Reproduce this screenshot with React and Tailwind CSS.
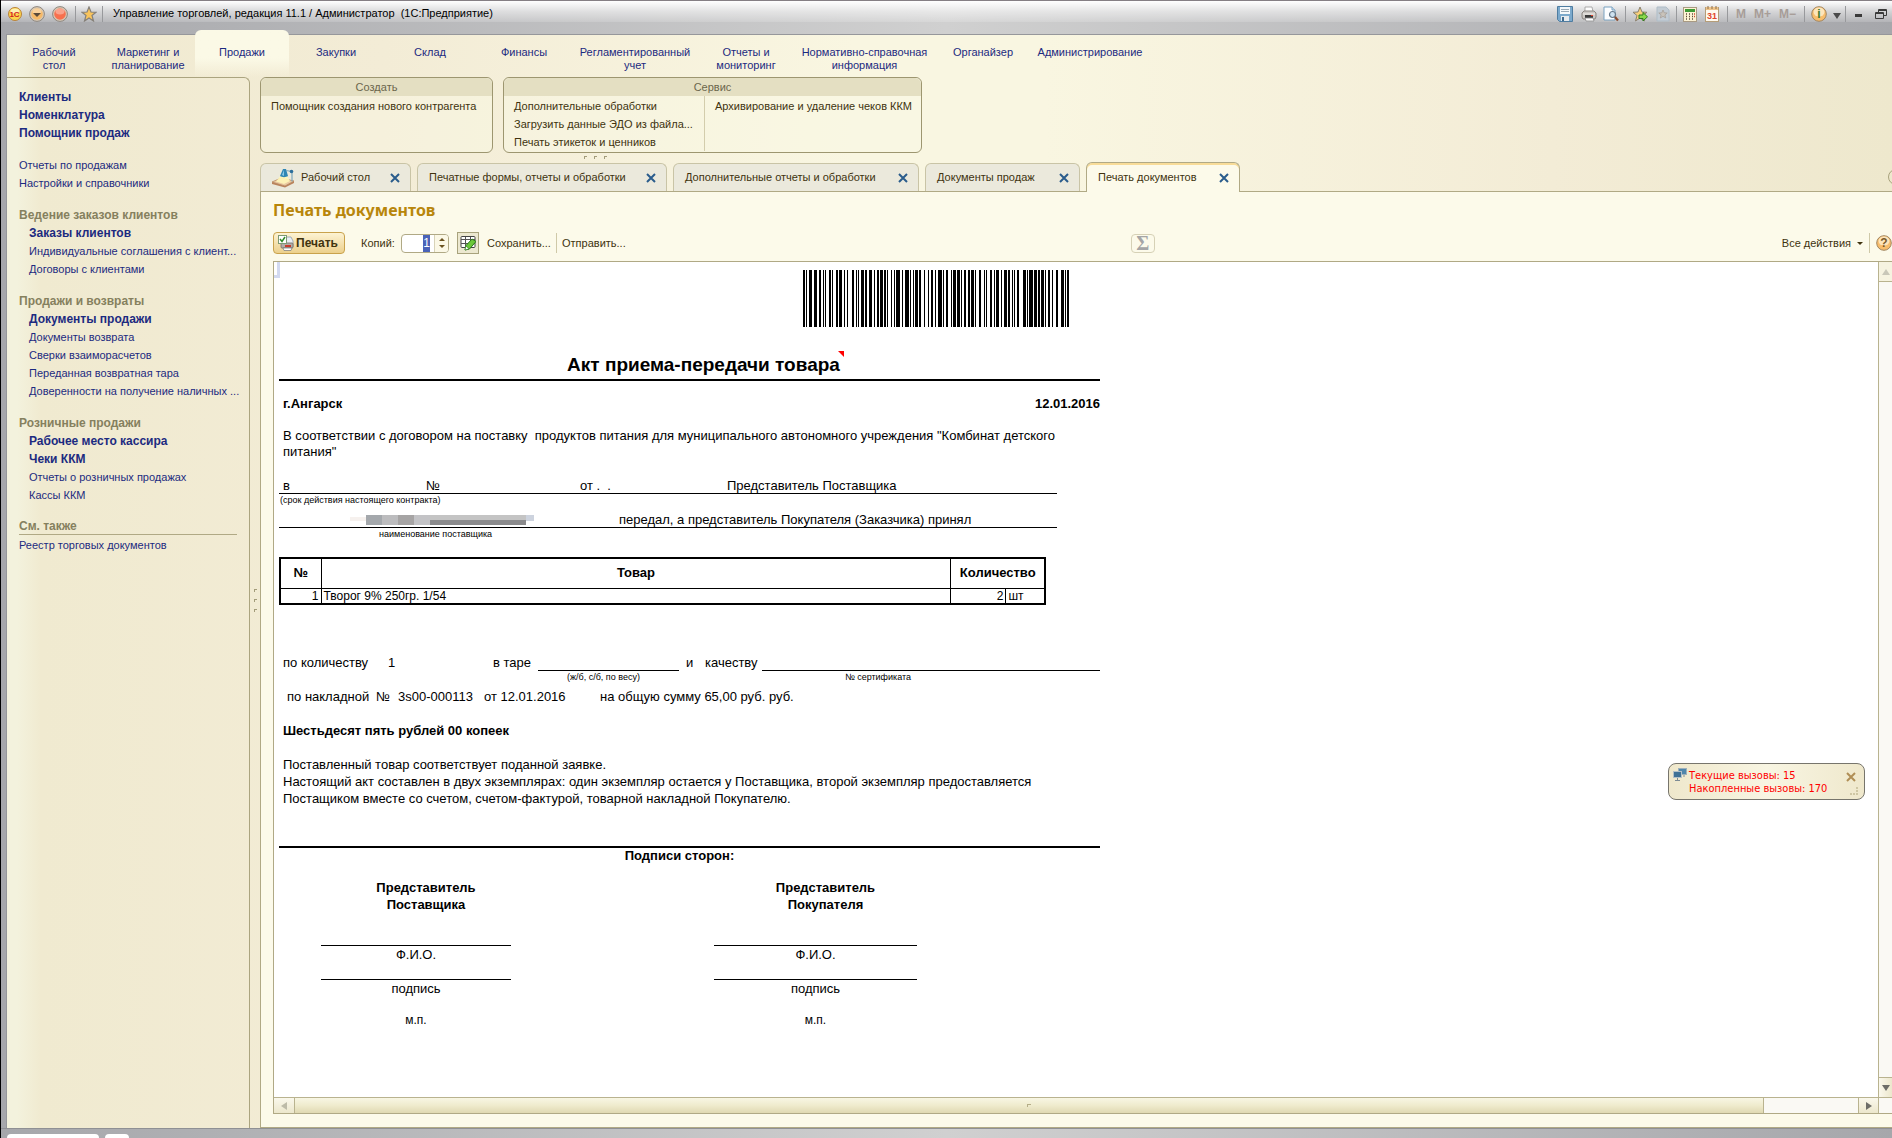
import { useEffect, useRef } from 'react'

const SECTIONS = [
  { label: 'Рабочий\nстол', width: 'w-[94px]' },
  { label: 'Маркетинг и\nпланирование', width: 'w-[94px]' },
  { label: 'Продажи', width: 'w-[94px]', active: true },
  { label: 'Закупки', width: 'w-[94px]' },
  { label: 'Склад', width: 'w-[94px]' },
  { label: 'Финансы', width: 'w-[94px]' },
  { label: 'Регламентированный\nучет', width: 'w-[128px]' },
  { label: 'Отчеты и\nмониторинг', width: 'w-[94px]' },
  { label: 'Нормативно-справочная\nинформация', width: 'w-[143px]' },
  { label: 'Органайзер', width: 'w-[94px]' },
  { label: 'Администрирование', width: 'w-[120px]' },
]

const SIDEBAR = [
  {
    items: [
      { label: 'Клиенты', bold: true },
      { label: 'Номенклатура', bold: true },
      { label: 'Помощник продаж', bold: true },
    ],
  },
  { items: [{ label: 'Отчеты по продажам' }, { label: 'Настройки и справочники' }] },
  {
    title: 'Ведение заказов клиентов',
    items: [
      { label: 'Заказы клиентов', bold: true },
      { label: 'Индивидуальные соглашения с клиент...' },
      { label: 'Договоры с клиентами' },
    ],
  },
  {
    title: 'Продажи и возвраты',
    items: [
      { label: 'Документы продажи', bold: true },
      { label: 'Документы возврата' },
      { label: 'Сверки взаиморасчетов' },
      { label: 'Переданная возвратная тара' },
      { label: 'Доверенности на получение наличных ...' },
    ],
  },
  {
    title: 'Розничные продажи',
    items: [
      { label: 'Рабочее место кассира', bold: true },
      { label: 'Чеки ККМ', bold: true },
      { label: 'Отчеты о розничных продажах' },
      { label: 'Кассы ККМ' },
    ],
  },
]

const TABS = [
  { label: 'Рабочий стол', width: 'w-[151px]', desk: true },
  { label: 'Печатные формы, отчеты и обработки', width: 'w-[250px]' },
  { label: 'Дополнительные отчеты и обработки', width: 'w-[246px]' },
  { label: 'Документы продаж', width: 'w-[155px]' },
  { label: 'Печать документов', width: 'w-[154px]', active: true },
]

// [offset, width] of every bar
const BARS = [
  [0, 2], [3, 1], [6, 3], [11, 3], [16, 2], [20, 1], [22, 1], [26, 2], [29, 1], [33, 2], [36, 3], [41, 1],
  [44, 1], [49, 2], [53, 1], [55, 1], [58, 3], [62, 2], [66, 3], [71, 1], [74, 2], [77, 3], [81, 2], [84, 1],
  [88, 1], [91, 1], [93, 4], [99, 1], [102, 4], [107, 1], [110, 1], [112, 3], [116, 2], [121, 1], [125, 1],
  [128, 2], [132, 1], [135, 4], [140, 1], [143, 2], [148, 1], [150, 3], [154, 3], [158, 1], [161, 2], [165, 2],
  [168, 3], [172, 1], [176, 2], [181, 1], [183, 1], [187, 2], [191, 1], [193, 3], [198, 1], [201, 3], [205, 2],
  [209, 1], [211, 1], [214, 2], [220, 3], [224, 1], [226, 4], [231, 3], [235, 2], [238, 3], [242, 1], [245, 2],
  [249, 1], [253, 2], [258, 3], [262, 1], [264, 2],
]

/* ── Icons ────────────────────────────────── */

const STAR = 'M8 1l2 5 5 .3-4 3.2 1.5 5.5L8 12l-4.500 3L5 9.500 1 6.300 6 6z'

function StarIcon({ fill = '#f9c45c', stroke = '#85807a' }) {
  return (
    <svg width="16" height="16" viewBox="0 0 16 16">
      <path d={STAR} fill={fill} stroke={stroke} strokeWidth="1.200" />
    </svg>
  )
}

function SaveIcon() {
  return (
    <svg width="16" height="16" viewBox="0 0 16 16">
      <path d="M.5 .5h15v15H2.500l-2-2z" fill="#7ba9cc" stroke="#4f7da1" />
      <rect x="3" y="1" width="10" height="7" fill="#f4f8fb" />
      <path d="M4 3.500h8M4 5.500h8" stroke="#9aa9b5" />
      <rect x="4" y="10" width="8" height="5" fill="#e6eaee" />
      <rect x="5" y="11" width="2" height="4" fill="#3e6a8e" />
    </svg>
  )
}

function PrinterIcon() {
  return (
    <svg width="16" height="16" viewBox="0 0 16 16">
      <path d="M4 1h7l1 5H4z" fill="#fdfdfd" stroke="#9a9a9a" strokeWidth=".8" />
      <path d="M1 7l2-2h10l2 2v4l-1 2H2l-1-2z" fill="#cbc8c4" stroke="#8b8681" />
      <path d="M2 8h12" stroke="#f2f0ec" />
      <rect x="4" y="9" width="8" height="3" fill="#3b3b3b" />
      <rect x="10" y="9" width="2" height="1" fill="#e5442e" />
      <path d="M4 12h8l1 3H5z" fill="#fff" stroke="#8b8b8b" strokeWidth=".8" />
    </svg>
  )
}

function PreviewIcon() {
  return (
    <svg width="16" height="16" viewBox="0 0 16 16">
      <path d="M1 1h8l3 3v10H1z" fill="#fbfdff" stroke="#7ba3c2" />
      <path d="M9 1v3h3" fill="#cfe0ee" stroke="#7ba3c2" />
      <circle cx="9.500" cy="8.500" r="3" fill="#cfe2f0" stroke="#66798a" strokeWidth="1.200" />
      <path d="M12 11l3 3.500" stroke="#8a4b2e" strokeWidth="2.200" />
    </svg>
  )
}

function StarAddIcon() {
  return (
    <svg width="16" height="16" viewBox="0 0 16 16">
      <path d={STAR} fill="#f9cf7a" stroke="#8a8272" />
      <path d="M7 9h4V6.500l4.500 4.300L11 15v-2.500H7z" fill="#8ad84a" stroke="#2f7d1f" />
    </svg>
  )
}

function StarPageIcon() {
  return (
    <svg width="14" height="16" viewBox="0 0 14 16">
      <path d="M1 1h9l3 3v11H1z" fill="#c3ccd4" stroke="#afbdc8" />
      <path d="M7 4l1.200 2.800 3 .2-2.300 1.900.8 3L7 10.300 4.300 12l.8-3.100L2.800 7l3-.2z" fill="#c9c3ba" stroke="#a6a099" strokeWidth=".8" />
    </svg>
  )
}

function CalcIcon() {
  return (
    <svg width="14" height="16" viewBox="0 0 14 16">
      <rect x=".5" y="1.500" width="13" height="14" fill="#fdf3d4" stroke="#a99a83" />
      <rect x="2" y="3" width="10" height="3" fill="#3f9a35" />
      <path d="M3 8h1m2 0h1m2 0h1M3 10.500h1m2 0h1m2 0h1M3 13h1m2 0h1m2 0h1" stroke="#5c4c3a" strokeWidth="1.500" />
      <path d="M11 8h1m-1 2.500h1" stroke="#d2492f" strokeWidth="1.500" />
    </svg>
  )
}

function CalendarIcon() {
  return (
    <svg width="14" height="16" viewBox="0 0 14 16">
      <rect x=".5" y="1.500" width="13" height="14" fill="#fffaf0" stroke="#b59d78" />
      <rect x="1" y="1" width="12" height="3" fill="#eec48b" />
      <path d="M3 0v3m4-3v3m4-3v3" stroke="#8a6d4a" />
      <text x="7" y="13" textAnchor="middle" fontSize="9" fontWeight="bold" fontFamily="Liberation Sans, sans-serif" fill="#e0452c">31</text>
    </svg>
  )
}

function RoundIcon({ glyph, color = '#3d7a2c' }) {
  return (
    <svg width="16" height="16" viewBox="0 0 16 16">
      <circle cx="8" cy="8" r="7.300" fill="#f8bd6c" stroke="#a08560" />
      <ellipse cx="8" cy="6" rx="5.500" ry="4.500" fill="#fde5bb" />
      <text x="8" y="12" textAnchor="middle" fontSize="12" fontWeight="bold" fontFamily="Liberation Sans, sans-serif" fill={color}>
        {glyph}
      </text>
    </svg>
  )
}

function LogoIcon() {
  return (
    <svg width="14" height="14" viewBox="0 0 14 14">
      <circle cx="7" cy="7" r="6.500" fill="#fbd44c" stroke="#b9823b" />
      <ellipse cx="7" cy="4" rx="4.500" ry="2.500" fill="#fdf0b2" />
      <text x="6.500" y="10" textAnchor="middle" fontSize="8" fontWeight="bold" fontFamily="Liberation Sans, sans-serif" fill="#d3221f">1С</text>
    </svg>
  )
}

function BallIcon({ fill, arrow }) {
  return (
    <svg width="16" height="16" viewBox="0 0 16 16">
      <circle cx="8" cy="8" r="7.400" fill="#d9c9b4" stroke="#8d8780" />
      <circle cx="8" cy="8" r="5.800" fill={fill} />
      <ellipse cx="8" cy="5.500" rx="4.500" ry="3" fill="#fff" opacity=".35" />
      {arrow && <path d="M4 7h8l-4 4z" fill="#5a4a3a" />}
    </svg>
  )
}

function DeskIcon() {
  return (
    <svg width="24" height="20" viewBox="0 0 24 20">
      <path d="M1 14l9-4 13 3-9 5z" fill="#eac9a2" stroke="#b98a62" strokeWidth=".8" />
      <path d="M1 14v2l13 3.500 9-4.500v-2l-9 5z" fill="#b9835c" />
      <path d="M5 13.500L10 7l6 1 3 5-6 3z" fill="#fff6b8" opacity=".9" />
      <path d="M9 8l3-7h3l2 7c-2 1.500-6 1.500-8 0z" fill="#2f86b5" />
      <path d="M11 7l2-5v6z" fill="#8cc8e4" />
      <path d="M15 2.500l6 1v10" fill="none" stroke="#7fa9bd" strokeWidth="1.200" />
      <circle cx="20.500" cy="3.500" r="1.800" fill="#2c6f9c" />
    </svg>
  )
}

function CloseIcon({ color = '#2a5c8c' }) {
  return (
    <svg width="10" height="10" viewBox="0 0 10 10">
      <path d="M1 1l8 8M9 1L1 9" stroke={color} strokeWidth="2" />
    </svg>
  )
}

function PrintListIcon() {
  return (
    <svg width="16" height="16" viewBox="0 0 16 16">
      <path d="M6 2h7l2 4v6H6z" fill="#e9eef3" stroke="#8b9db0" strokeWidth=".8" />
      <rect x="3" y="8" width="12" height="5" rx="1" fill="#b3aea8" stroke="#706a64" strokeWidth=".8" />
      <rect x="7" y="10" width="6" height="2" fill="#c93a2b" />
      <path d="M5 13h9l-1 2.500H6z" fill="#fff" stroke="#777" strokeWidth=".7" />
      <rect x=".5" y=".5" width="8" height="8" fill="#fff" stroke="#7e9a74" />
      <path d="M2 4l2 2.500L7 2" fill="none" stroke="#2f8a26" strokeWidth="1.500" />
    </svg>
  )
}

function EditGridIcon() {
  return (
    <svg width="16" height="16" viewBox="0 0 16 16">
      <rect x="1" y="1.500" width="14" height="11" rx="1" fill="#fff" stroke="#444" />
      <path d="M1 4.500h14M1 8.500h14M5.500 2v11M10.500 2v11" stroke="#555" />
      <path d="M5 15l1-4.500L12 4l4 2.500-6.500 7.500z" fill="#6cc83a" stroke="#2d7a1c" />
      <path d="M5 15l1-4 3 2.800z" fill="#fff" stroke="#2d7a1c" strokeWidth=".6" />
    </svg>
  )
}

function ScreensIcon() {
  return (
    <svg width="14" height="14" viewBox="0 0 14 14">
      <rect x="5.500" y=".5" width="8" height="6" fill="#4f86ac" stroke="#9fb0ba" />
      <rect x=".5" y="3.500" width="8" height="6" fill="#3f7196" stroke="#b3c0c8" />
      <path d="M4.500 10v2M2 12.500h5M11 7v2" stroke="#7d8b94" />
    </svg>
  )
}

function Triangle({ dir, color = '#6d6d68' }) {
  const paths = {
    up: 'M0 7l4-6 4 6z',
    down: 'M0 1l4 6 4-6z',
    left: 'M7 0L1 4l6 4z',
    right: 'M1 0l6 4-6 4z',
  }
  return (
    <svg width="8" height="8" viewBox="0 0 8 8">
      <path d={paths[dir]} fill={color} />
    </svg>
  )
}

function Grip({ vertical }) {
  return (
    <div className={`flex gap-[7px] ${vertical ? 'flex-col' : ''}`}>
      {[0, 1, 2].map((i) => (
        <span key={i} className="size-[3px] border-l border-t border-[#a39c7a]" />
      ))}
    </div>
  )
}

/* ── Window chrome ────────────────────────── */

function Separator() {
  return <span className="h-4 w-px bg-[#98999c]" />
}

function TitleBar() {
  return (
    <header className="flex h-[22px] shrink-0 items-center border-t border-[#857f84] bg-linear-to-b from-white via-white/50 to-white/15 pt-1 pl-[7px]">
      <div className="flex items-center gap-[7px]">
        <button aria-label="Главное меню"><LogoIcon /></button>
        <button aria-label="Команды"><BallIcon fill="#f6b968" arrow /></button>
        <button aria-label="Закрыть"><BallIcon fill="#f7704e" /></button>
        <Separator />
        <button aria-label="Избранное" className="-mx-0.5"><StarIcon /></button>
        <Separator />
      </div>
      <h1 className="ml-2.5 flex-1 text-[11px] whitespace-pre text-black">
        Управление торговлей, редакция 11.1 / Администратор  (1С:Предприятие)
      </h1>
      <div className="flex items-center gap-1.5 pr-[5px]">
        <button aria-label="Сохранить" className="mr-0.5"><SaveIcon /></button>
        <button aria-label="Печать"><PrinterIcon /></button>
        <button aria-label="Просмотр"><PreviewIcon /></button>
        <Separator />
        <button aria-label="Добавить в избранное"><StarAddIcon /></button>
        <button aria-label="Страница избранного" className="ml-0.5"><StarPageIcon /></button>
        <Separator />
        <button aria-label="Калькулятор"><CalcIcon /></button>
        <button aria-label="Календарь" className="mx-0.5"><CalendarIcon /></button>
        <Separator />
        <div className="mx-0.5 flex gap-2 text-[12px] font-bold text-[#a79d98]">
          <button>M</button>
          <button>M+</button>
          <button>M−</button>
        </div>
        <Separator />
        <button aria-label="Справка"><RoundIcon glyph="i" /></button>
        <button aria-label="Еще" className="mt-1 -mr-0.5"><Triangle dir="down" color="#4a4a4a" /></button>
        <Separator />
        <button aria-label="Свернуть" className="mt-1 ml-[3px] h-[3px] w-[7px] bg-[#3a3a3a]" />
        <button aria-label="Развернуть" className="ml-[7px]">
          <svg width="12" height="12" viewBox="0 0 12 12" fill="none" stroke="#3a3a3a">
            <path d="M3.500 4V1.500h8v6H9M3 2.500h9" />
            <path d="M.5 4.500h8v6h-8zM0 5.500h9" />
          </svg>
        </button>
      </div>
    </header>
  )
}

function SectionNav() {
  return (
    <nav className="flex h-[42px] shrink-0">
      {SECTIONS.map(({ label, width, active }) => (
        <a
          key={label}
          href="#"
          className={`${width} shrink-0 text-center leading-[13px] whitespace-pre text-[#1c2a80] ${
            active ? '-mt-[5px] rounded-t-md bg-linear-to-b from-[#fbf9e6] from-60% to-[#fbf9e6]/0 pt-4' : 'pt-[11px]'
          }`}
        >
          {label}
        </a>
      ))}
    </nav>
  )
}

function Sidebar() {
  return (
    <aside className="flex w-[243px] shrink-0 flex-col gap-3.5 rounded-tr-md border-t border-r border-[#aba47f] pt-2.5 pr-3 pl-3 leading-[18px] text-[#1c2a80]">
      {SIDEBAR.map(({ title, items }, i) => (
        <section key={i}>
          {title && <h2 className="text-[12px] font-bold text-[#85805e]">{title}</h2>}
          <ul className={title ? 'pl-2.5' : ''}>
            {items.map(({ label, bold }) => (
              <li key={label} className="h-[18px] whitespace-nowrap">
                <a href="#" className={bold ? 'text-[12px] font-bold' : ''}>{label}</a>
              </li>
            ))}
          </ul>
        </section>
      ))}
      <section>
        <h2 className="border-b border-[#b0a985] text-[12px] leading-4 font-bold text-[#85805e]">См. также</h2>
        <a href="#" className="block pt-px">Реестр торговых документов</a>
      </section>
    </aside>
  )
}

function CommandGroup({ title, width, children }) {
  return (
    <section className={`${width} h-[76px] rounded-md border border-[#9d9670] bg-[#fbf9e6]/40`}>
      <h2 className="rounded-t-md bg-[#e4dfc2] text-center leading-[18px] text-[#6b664c]">{title}</h2>
      <div className="flex leading-[18px] text-[#40330f]">{children}</div>
    </section>
  )
}

function TabStrip() {
  return (
    <div className="flex h-[29px] items-end gap-1.5">
      {TABS.map(({ label, width, desk, active }) => (
        <div
          key={label}
          className={`${width} flex shrink-0 items-center rounded-t-md border border-b-0 pr-2.5 text-[#40330f] ${
            active
              ? 'z-10 -mb-px h-[30px] border-[#b0a985] bg-[#fcfaea] shadow-[inset_0_2px_0_#f8dc98]'
              : 'h-7 border-[#c9c4a6] bg-[#ebe9dc]'
          } ${desk ? 'pl-2.5' : 'pl-[11px]'}`}
        >
          {desk && <DeskIcon />}
          <button className={`flex-1 text-left whitespace-nowrap ${desk ? 'pl-1.5' : ''}`}>{label}</button>
          <button aria-label={`Закрыть: ${label}`}><CloseIcon /></button>
        </div>
      ))}
      <button aria-label="Список окон" className="-mr-3 mb-1.5 ml-auto size-4 rounded-full border border-[#a8a27c]" />
    </div>
  )
}

/* ── Print form ───────────────────────────── */

function Toolbar() {
  const copies = useRef(null)

  useEffect(() => {
    copies.current.focus()
    copies.current.select()
  }, [])

  return (
    <div className="flex h-[22px] items-center text-[#40330f]">
      <button className="flex h-[22px] w-[72px] items-center gap-0.5 rounded border border-[#c9a24c] bg-linear-to-b from-[#fdf3d3] to-[#ecd08c] pl-1 text-[12px] font-bold">
        <PrintListIcon />
        Печать
      </button>
      <label htmlFor="copies" className="ml-4 w-10">Копий:</label>
      <div className="flex h-[19px] w-12 overflow-hidden rounded border border-[#b0a985] bg-white">
        <input
          id="copies"
          ref={copies}
          defaultValue="1"
          className="w-8 pr-1 text-right text-[12px] text-black outline-none selection:bg-[#4a63b8] selection:text-white"
        />
        <div className="flex flex-1 flex-col items-center justify-center gap-1 border-l border-[#d8d3b8] bg-[#fbf8e6]">
          <button aria-label="Больше" className="border-x-3 border-b-3 border-x-transparent border-b-[#6b5320]" />
          <button aria-label="Меньше" className="border-x-3 border-t-3 border-x-transparent border-t-[#6b5320]" />
        </div>
      </div>
      <button aria-label="Редактирование" className="ml-2 grid h-[22px] w-[22px] place-items-center border border-[#a8a27c] bg-[#ece8d0]">
        <EditGridIcon />
      </button>
      <button className="ml-2 w-[69px] text-left">Сохранить...</button>
      <span className="h-5 w-px bg-[#cfc9a8]" />
      <button className="ml-[5px] text-left">Отправить...</button>
      <button aria-label="Сумма" className="ml-[505px] h-[19px] w-6 rounded border border-[#d6d1b6] font-['Liberation_Serif',serif] text-[20px] leading-4 font-bold text-[#a5a5a5]">
        Σ
      </button>
      <button className="ml-auto flex items-center gap-1.5">
        Все действия
        <span className="border-x-3 border-t-3 border-x-transparent border-t-[#40330f]" />
      </button>
      <span className="mx-1.5 h-5 w-px bg-[#cfc9a8]" />
      <button aria-label="Справка"><RoundIcon glyph="?" color="#7a5a2a" /></button>
    </div>
  )
}

function Signature({ party, indent, width }) {
  return (
    <div className={`${indent} ${width} text-center`}>
      <p className="pl-5 leading-[17px] font-bold">
        Представитель
        <br />
        {party}
      </p>
      <p className="mt-8 border-t border-black pt-px">Ф.И.О.</p>
      <p className="mt-4 border-t border-black pt-px">подпись</p>
      <p className="mt-[15px] text-[12px]">м.п.</p>
    </div>
  )
}

function PrintForm() {
  return (
    <article className="w-[821px] text-[13px] leading-4 text-black">
      <svg className="mt-2 ml-[524px]" width="266" height="57" shapeRendering="crispEdges">
        {BARS.map(([x, w]) => (
          <rect key={x} x={x} width={w} height="57" />
        ))}
      </svg>

      <h2 className="flex h-[54px] items-end justify-center border-b-2 border-black pl-7 text-[19px] leading-7 font-bold">
        <span className="relative">
          Акт приема-передачи товара
          <span className="absolute top-0 -right-1 border-t-6 border-l-6 border-t-[#f00] border-l-transparent" />
        </span>
      </h2>

      <div className="mt-[15px] flex justify-between pl-1 font-bold">
        <span>г.Ангарск</span>
        <span>12.01.2016</span>
      </div>
      <p className="mt-4 pr-8 pl-1 whitespace-pre-wrap">
        В соответствии с договором на поставку  продуктов питания для муниципального автономного учреждения "Комбинат детского питания"
      </p>

      <div className="mt-[19px] flex w-[778px] border-b border-black pl-1 leading-[14px]">
        <span className="w-[143px]">в</span>
        <span className="w-[154px]">№</span>
        <span className="w-[147px] whitespace-pre">от .  .</span>
        <span>Представитель Поставщика</span>
      </div>
      <p className="pl-px text-[9px] leading-3">(срок действия настоящего контракта)</p>
      <div className="mt-[7px] flex w-[778px] items-center border-b border-black leading-[14px]">
        <span className="ml-[71px] flex h-2.5 w-[198px]">
          <span className="mt-0.5 h-1 w-4 bg-[#f6f1ee]" />
          <span className="w-4 bg-[#a4a8ac]" />
          <span className="w-4 bg-[#bcbcbe]" />
          <span className="w-4 bg-[#a6a4a4]" />
          <span className="w-4 bg-[#c3c3c6]" />
          <span className="w-24 bg-linear-to-b from-[#c4c4c4] from-50% to-[#8b8b8d] to-50%" />
          <span className="h-1.5 w-2 bg-[#cdd3de]" />
        </span>
        <span className="ml-[71px]">передал, а представитель Покупателя (Заказчика) принял</span>
      </div>
      <p className="pl-[100px] text-[9px] leading-3">наименование поставщика</p>

      <table className="mt-[17px] w-[767px] table-fixed border-collapse border-2 border-black">
        <colgroup>
          <col className="w-[41px]" />
          <col />
          <col className="w-[55px]" />
          <col className="w-[39px]" />
        </colgroup>
        <thead>
          <tr className="h-[30px] border-b border-black">
            <th className="border-r border-black">№</th>
            <th className="border-r border-black">Товар</th>
            <th colSpan={2}>Количество</th>
          </tr>
        </thead>
        <tbody>
          <tr className="text-[12px] leading-[14px]">
            <td className="border-r border-black pr-0.5 text-right">1</td>
            <td className="border-r border-black pl-0.5">Творог 9% 250гр. 1/54</td>
            <td className="border-r border-black pr-0.5 text-right">2</td>
            <td className="pl-0.5">шт</td>
          </tr>
        </tbody>
      </table>

      <div className="mt-[50px] flex pl-1">
        <span className="w-[105px]">по количеству</span>
        <span className="w-[105px]">1</span>
        <span className="w-[45px]">в таре</span>
        <span className="w-[141px] border-b border-black" />
        <span className="w-[26px] pl-[7px]">и</span>
        <span className="w-[57px]">качеству</span>
        <span className="flex-1 border-b border-black" />
      </div>
      <div className="flex text-[9px] leading-3">
        <span className="w-[278px] pl-72 whitespace-nowrap">(ж/б, с/б, по весу)</span>
        <span className="pl-[278px]">№ сертификата</span>
      </div>
      <div className="mt-1.5 flex pl-2">
        <span className="w-[89px]">по накладной</span>
        <span className="w-[22px]">№</span>
        <span className="w-[86px]">3s00-000113</span>
        <span className="w-[116px]">от 12.01.2016</span>
        <span>на общую сумму 65,00 руб. руб.</span>
      </div>
      <p className="mt-[18px] pl-1 font-bold">Шестьдесят пять рублей 00 копеек</p>
      <p className="mt-[17px] pr-8 pl-1 leading-[17px]">
        Поставленный товар соответствует поданной заявке.
        <br />
        Настоящий акт составлен в двух экземплярах: один экземпляр остается у Поставщика, второй экземпляр предоставляется Постащиком вместе со счетом, счетом-фактурой, товарной накладной Покупателю.
      </p>

      <p className="mt-[39px] border-t-2 border-black pr-5 text-center font-bold">Подписи сторон:</p>
      <div className="mt-[15px] flex">
        <Signature party="Поставщика" indent="ml-[42px]" width="w-[190px]" />
        <Signature party="Покупателя" indent="ml-[203px]" width="w-[203px]" />
      </div>
    </article>
  )
}

function SheetView() {
  return (
    <div className="mt-[7px] flex flex-1 flex-col border border-r-0 border-[#b0a985] bg-white">
      <div className="flex flex-1">
        <div className="relative flex-1 pl-[5px]">
          <span className="absolute top-0 left-0 h-4 w-1.5 border-r-3 border-b-3 border-[#d3daf0]" />
          <PrintForm />
        </div>
        <div className="flex w-[14px] flex-col border-l border-[#b9b38f] bg-[#faf9f4]">
          <button aria-label="Вверх" className="grid h-5 place-items-center border-b border-[#b9b38f] bg-[#f6f3e0]"><Triangle dir="up" color="#c9c7b8" /></button>
          <button aria-label="Вниз" className="mt-auto grid h-5 place-items-center border-t border-[#b9b38f] bg-linear-to-r from-[#faf8ec] to-[#ece7cc]"><Triangle dir="down" /></button>
        </div>
      </div>
      <div className="flex h-4 border-t border-[#b9b38f] bg-[#faf9f4]">
        <button aria-label="Влево" className="grid w-[21px] place-items-center border-r border-[#b9b38f] bg-linear-to-b from-[#faf8ec] to-[#ece7cc]"><Triangle dir="left" color="#bdbba8" /></button>
        <div className="flex flex-1">
          <div className="grid w-[94%] place-items-center border-r border-[#b9b38f] bg-linear-to-b from-[#f8f6e4] via-[#efebcd] to-[#e0d9b2]">
            <span className="h-[3px] w-1 border-t border-l border-[#b5ae88]" />
          </div>
        </div>
        <button aria-label="Вправо" className="grid w-[21px] place-items-center border-x border-[#b9b38f] bg-linear-to-b from-[#faf8ec] to-[#ece7cc]"><Triangle dir="right" /></button>
        <span className="w-[13px]" />
      </div>
    </div>
  )
}

function CallsPopup() {
  return (
    <div className="absolute right-[27px] bottom-[338px] flex h-[37px] w-[197px] rounded-lg border border-[#77756c] bg-linear-to-r from-[#efe8cc] via-[#f8f5e2] to-[#efe8cc] pt-1 pl-1 text-[11px] leading-[13px] text-[#f00]">
      <ScreensIcon />
      <p className="ml-0.5 flex-1 pt-px font-[Tahoma,'DejaVu_Sans_Condensed','Noto_Sans',sans-serif]">
        Текущие вызовы: 15
        <br />
        Накопленные вызовы: 170
      </p>
      <button aria-label="Закрыть" className="mt-1 mr-2 self-start"><CloseIcon color="#b08e56" /></button>
      <span className="absolute right-1.5 bottom-1 size-2 border-r-2 border-b-2 border-dotted border-[#cfc7a4]" />
    </div>
  )
}

export default function App() {
  return (
    <div className="relative flex min-h-screen flex-col overflow-hidden border-l border-black bg-linear-to-r from-[#a6a7ab] via-[#d0d0d0] to-[#a6a7ab] font-['Liberation_Sans',Arial,sans-serif] text-[11px]">
      <TitleBar />
      <div className="mt-3 ml-[5px] flex flex-1 flex-col border-t border-l border-[#96979b] bg-[linear-gradient(90deg,#f3f2dd_0,#f3f2dd_10px,#f0ead0_34px,#f3ecd6_20%,#f9f6e1_45%,#f9f6e1_55%,#f3ecd6_82%,#eee8cd_100%)]">
        <SectionNav />
        <div className="flex flex-1">
          <Sidebar />
          <div className="flex w-[10px] flex-col items-center pt-[512px]">
            <Grip vertical />
          </div>
          <main className="flex min-w-0 flex-1 flex-col">
            <div className="flex gap-2.5">
              <CommandGroup title="Создать" width="w-[233px]">
                <a href="#" className="pt-px pl-2.5">Помощник создания нового контрагента</a>
              </CommandGroup>
              <CommandGroup title="Сервис" width="w-[419px]">
                <div className="flex w-[201px] flex-col border-r border-[#d3cdac] pt-px pl-2.5">
                  <a href="#">Дополнительные обработки</a>
                  <a href="#">Загрузить данные ЭДО из файла...</a>
                  <a href="#">Печать этикеток и ценников</a>
                </div>
                <a href="#" className="pt-px pl-2.5">Архивирование и удаление чеков ККМ</a>
              </CommandGroup>
            </div>
            <div className="flex h-[9px] items-center pl-[324px]">
              <Grip />
            </div>
            <TabStrip />
            <div className="flex flex-1 flex-col border-t border-b border-l border-[#b0a985] bg-[#fcfaea] pb-[13px] pl-3">
              <h2 className="pt-2 pb-3 font-['Noto_Sans',sans-serif] text-[16px] leading-5 font-bold text-[#b8860b]">Печать документов</h2>
              <Toolbar />
              <SheetView />
            </div>
          </main>
        </div>
      </div>
      <footer className="flex h-2.5 items-end gap-1.5 border-t border-[#8f9094] pl-1.5">
        <span className="h-1 w-[92px] rounded-t-sm bg-white" />
        <span className="h-1 w-6 rounded-t-sm bg-white" />
      </footer>
      <CallsPopup />
    </div>
  )
}
